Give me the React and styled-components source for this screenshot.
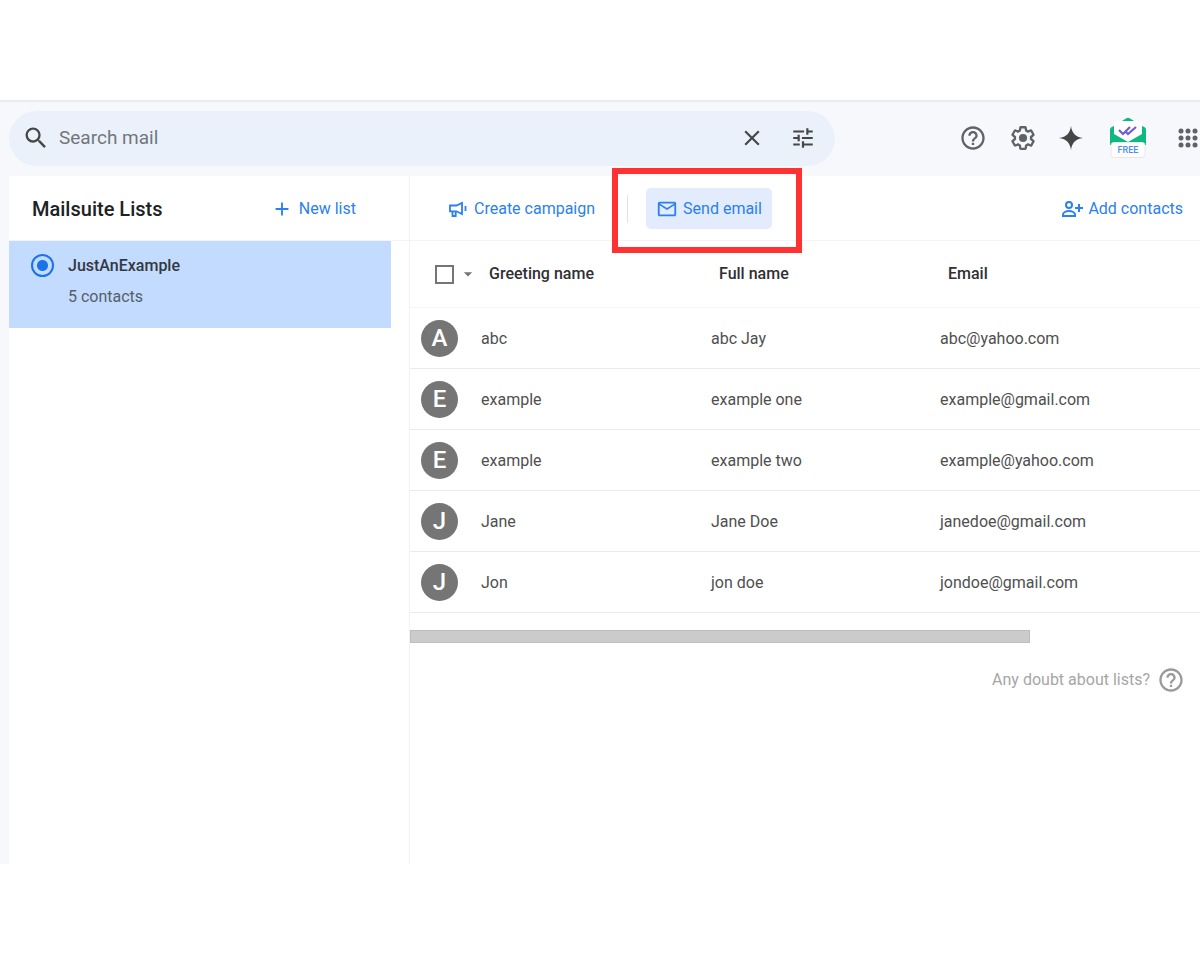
import React from "react";
import styled, { createGlobalStyle, css } from "styled-components";
import { MdSearch, MdClose, MdTune, MdHelpOutline, MdAdd, MdMailOutline, MdArrowDropDown } from "react-icons/md";

const sans = `Roboto, "Noto Sans", "Liberation Sans", sans-serif`;

const Global = createGlobalStyle`
  *, *::before, *::after { box-sizing: border-box; }
  body { margin: 0; background: #fff; font-family: ${sans}; font-size: 16px; line-height: 24px; color: #4f4f4f; }
  button, input { font: inherit; }
  button { border: 0; padding: 0; background: none; cursor: pointer; color: inherit; }
`;

const Page = styled.div`
  padding: 100px 0 96px;
`;

const Shell = styled.div`
  border-top: 2px solid #e9ebee;
  background: #f6f8fc;
  padding-left: 9px;
  overflow: hidden;
`;

const Header = styled.header`
  display: flex;
  align-items: center;
  justify-content: space-between;
  height: 74px;
  padding-bottom: 2px;
`;

const SearchBar = styled.form`
  flex: 0 1 826px;
  display: flex;
  align-items: center;
  height: 55px;
  padding: 0 19px 0 13px;
  border-radius: 28px;
  background: #eaf1fb;
  color: #444746;
`;

const IconButton = styled.button`
  display: grid;
  place-items: center;
  flex: none;
  width: ${(p) => p.$size || 26}px;
  height: ${(p) => p.$size || 26}px;
  color: ${(p) => p.$color || "#444746"};
  svg { width: 100%; height: 100%; display: block; }
`;

const SearchInput = styled.input`
  flex: 1;
  min-width: 0;
  margin: 0 9px;
  padding: 0;
  border: 0;
  outline: 0;
  background: transparent;
  font-size: 19px;
  color: #444746;
  &::placeholder { color: #72777b; opacity: 1; }
`;

const SearchTools = styled.div`
  display: flex;
  gap: 25px;
`;

const HeaderTools = styled.nav`
  display: flex;
  align-items: center;
  gap: 22px;
  margin-right: -2px;
`;

const Badge = styled.button`
  width: 38px;
  height: 42px;
  margin: 0 5px 0 4px;
  svg { display: block; }
`;

const Main = styled.div`
  display: flex;
  min-height: 688px;
  background: #fff;
`;

const Sidebar = styled.aside`
  flex: 0 0 401px;
  border-right: 1px solid #f2f2f4;
`;

const Bar = styled.div`
  display: flex;
  align-items: center;
  height: 65px;
  padding-top: 1px;
  border-bottom: 1px solid #f4f4f5;
`;

const SidebarBar = styled(Bar)`
  justify-content: space-between;
  padding-left: 23px;
  padding-right: 53px;
`;

const Title = styled.h1`
  margin: 0;
  font-size: 20px;
  font-weight: 500;
  color: #202124;
`;

const Action = styled.button`
  display: flex;
  align-items: center;
  gap: ${(p) => p.$gap || 5}px;
  height: 41px;
  color: #2b7fef;
  white-space: nowrap;
  svg { width: 22px; height: 22px; flex: none; }
  ${(p) =>
    p.$active &&
    css`
      padding: 0 10px;
      border-radius: 5px;
      background: #e3ecfd;
    `}
`;

const ListItem = styled.label`
  display: grid;
  grid-template-columns: 23px 1fr;
  column-gap: 14px;
  align-items: start;
  height: 87px;
  margin-right: 18px;
  padding: 13px 22px;
  background: #c2dbff;
  cursor: pointer;
`;

const Radio = styled.input`
  appearance: none;
  width: 23px;
  height: 23px;
  margin: 0;
  border: 2px solid #1a73e8;
  border-radius: 50%;
  background: radial-gradient(circle, #1a73e8 0 5px, transparent 6px);
`;

const ListText = styled.span`
  display: block;
  color: ${(p) => (p.$muted ? "#575f69" : "#34383e")};
  font-weight: ${(p) => (p.$muted ? 400 : 500)};
  & + & { margin-top: 7px; }
`;

const Content = styled.main`
  flex: 1;
  min-width: 0;
`;

const Toolbar = styled(Bar)`
  padding-left: 37px;
  padding-right: 17px;
`;

const Separator = styled.span`
  width: 1px;
  height: 28px;
  margin: 0 18px 0 32px;
  background: #e2e3e5;
`;

const Spacer = styled.span`
  flex: 1;
`;

const Highlighted = styled.div`
  position: relative;
  &::after {
    content: "";
    position: absolute;
    inset: -20px -30px -24px -34px;
    border: 6px solid #ff3131;
    pointer-events: none;
  }
`;

const TableWrap = styled.div`
  overflow: hidden;
`;

const Table = styled.table`
  width: 100%;
  min-width: 1006px;
  table-layout: fixed;
  border-collapse: separate;
  border-spacing: 0;
`;

const Col = styled.col`
  width: ${(p) => p.$w}px;
`;

const HeadCell = styled.th`
  height: 67px;
  padding: 0 8px;
  border-bottom: 1px solid #f4f4f5;
  text-align: left;
  font-weight: 500;
  color: #2f3033;
`;

const Cell = styled.td`
  height: 61px;
  padding: 2px 0 0;
  border-bottom: 1px solid #eaeaec;
`;

const AvatarCell = styled(Cell)`
  padding: 0;
`;

const SelectAll = styled.div`
  display: flex;
  align-items: center;
  gap: 4px;
  padding-left: 17px;
`;

const Checkbox = styled.input`
  appearance: none;
  flex: none;
  width: 19px;
  height: 19px;
  margin: 0;
  border: 2px solid #757575;
  background: #fff;
`;

const Avatar = styled.span`
  display: grid;
  place-items: center;
  width: 37px;
  height: 37px;
  margin-left: 11px;
  border-radius: 50%;
  background: #757575;
  color: #fff;
  font-size: 24px;
  font-weight: 500;
`;

const ScrollThumb = styled.div`
  width: 620px;
  max-width: 100%;
  height: 13px;
  margin-top: 17px;
  border: 1px solid #bdbdbd;
  background: #cbcbcb;
`;

const Help = styled.footer`
  display: flex;
  align-items: center;
  justify-content: flex-end;
  gap: 7px;
  margin-top: 23px;
  padding-right: 15px;
  color: #a6a6a6;
`;

const GearIcon = () => (
  <svg viewBox="0 0 24 24" fill="currentColor" aria-hidden="true">
    <path d="M13.85 22.25h-3.7c-.74 0-1.36-.54-1.45-1.27l-.27-1.89c-.27-.14-.53-.29-.79-.46l-1.8.72c-.7.26-1.47-.03-1.81-.65L2.2 15.53c-.35-.66-.2-1.44.36-1.88l1.53-1.19c-.01-.15-.02-.3-.02-.46 0-.15.01-.31.02-.46l-1.52-1.19c-.59-.45-.74-1.26-.37-1.88l1.85-3.19c.34-.62 1.11-.9 1.79-.63l1.81.73c.26-.17.52-.32.78-.46l.27-1.91c.09-.7.71-1.25 1.44-1.25h3.7c.74 0 1.36.54 1.45 1.27l.27 1.89c.27.14.53.29.79.46l1.8-.72c.71-.26 1.48.03 1.82.65l1.84 3.18c.36.66.2 1.44-.36 1.88l-1.52 1.19c.01.15.02.3.02.46s-.01.31-.02.46l1.52 1.19c.56.45.72 1.23.37 1.86l-1.86 3.22c-.34.62-1.11.9-1.8.63l-1.8-.72c-.26.17-.52.32-.78.46l-.27 1.91c-.1.68-.72 1.22-1.46 1.22zm-3.23-2h2.76l.37-2.55.53-.22c.44-.18.88-.44 1.34-.78l.45-.34 2.38.96 1.38-2.4-2.03-1.58.07-.56c.03-.26.06-.51.06-.78s-.03-.53-.06-.78l-.07-.56 2.03-1.58-1.39-2.4-2.39.96-.45-.35c-.42-.32-.87-.58-1.33-.77l-.52-.22-.37-2.55h-2.76l-.37 2.55-.53.21c-.44.19-.88.44-1.34.79l-.45.33-2.38-.95-1.39 2.39 2.03 1.58-.07.56a7 7 0 0 0-.06.79c0 .26.02.53.06.78l.07.56-2.03 1.58 1.38 2.4 2.39-.96.45.35c.43.33.86.58 1.33.77l.53.22.38 2.55z" />
    <circle cx="12" cy="12" r="3.5" />
  </svg>
);

const SparkIcon = () => (
  <svg viewBox="0 0 24 24" fill="currentColor" aria-hidden="true">
    <path d="M12 0c.9 6.800 4.200 11.100 12 12-7.800.9-11.100 5.200-12 12-.9-6.800-4.200-11.100-12-12C7.800 11.100 11.100 6.800 12 0z" />
  </svg>
);

const AppsIcon = () => (
  <svg viewBox="0 0 28 28" fill="currentColor" aria-hidden="true">
    {[7, 14, 21].map((y) => [7, 14, 21].map((x) => <circle key={`${x}-${y}`} cx={x} cy={y} r="2.500" />))}
  </svg>
);

const MegaphoneIcon = () => (
  <svg viewBox="0 0 22 22" fill="none" stroke="currentColor" strokeWidth="1.800" aria-hidden="true">
    <path d="M3 7.500h6.500L15 5v11l-5.500-2.700H3zM5.500 13.500V18h3.200v-4.500M18.500 8v5" />
  </svg>
);

const PersonAddIcon = () => (
  <svg viewBox="0 0 22 22" fill="none" stroke="currentColor" strokeWidth="2" aria-hidden="true">
    <circle cx="8" cy="7" r="3" />
    <path d="M2 18v-1.500c0-2 3-3.500 6-3.500s6 1.500 6 3.500V18zM18 6v8M14 10h8" />
  </svg>
);

const MailsuiteLogo = () => (
  <svg width="38" height="42" viewBox="0 0 38 42" aria-hidden="true">
    <path d="M1 13Q1 10 4 9.500L17 1.500Q19 0 21 1.500L34 9.500Q37 10 37 13v15H1z" fill="#0cb980" />
    <path d="M5 7q0-3 3-3h22q3 0 3 3v10L19 25 5 17z" fill="#fff" />
    <path d="m10 13 4 4 7-7M17 15l2 2 8-7" fill="none" stroke="#6c5dd3" strokeWidth="2.200" />
    <rect x="2" y="25.500" width="34" height="15" rx="3" fill="#fff" stroke="#e6e8ec" />
    <text x="19" y="36" textAnchor="middle" fontFamily="Roboto, sans-serif" fontSize="9" fontWeight="500" fill="#4a8df0">FREE</text>
  </svg>
);

const contacts = [
  ["abc", "abc Jay", "abc@yahoo.com"],
  ["example", "example one", "example@gmail.com"],
  ["example", "example two", "example@yahoo.com"],
  ["Jane", "Jane Doe", "janedoe@gmail.com"],
  ["Jon", "jon doe", "jondoe@gmail.com"],
];

export default function App() {
  return (
    <>
      <Global />
      <Page>
        <Shell>
          <Header>
            <SearchBar role="search">
              <IconButton type="button" $size={28} aria-label="Search"><MdSearch /></IconButton>
              <SearchInput type="text" placeholder="Search mail" aria-label="Search mail" />
              <SearchTools>
                <IconButton type="button" aria-label="Clear search"><MdClose /></IconButton>
                <IconButton type="button" aria-label="Search options"><MdTune /></IconButton>
              </SearchTools>
            </SearchBar>
            <HeaderTools aria-label="Tools">
              <IconButton $size={28} $color="#5f6368" aria-label="Help"><MdHelpOutline /></IconButton>
              <IconButton $size={28} $color="#5f6368" aria-label="Settings"><GearIcon /></IconButton>
              <IconButton $size={24} aria-label="Assistant"><SparkIcon /></IconButton>
              <Badge aria-label="Mailsuite"><MailsuiteLogo /></Badge>
              <IconButton $size={28} $color="#5f6368" aria-label="Apps"><AppsIcon /></IconButton>
            </HeaderTools>
          </Header>
          <Main>
            <Sidebar>
              <SidebarBar>
                <Title>Mailsuite Lists</Title>
                <Action $gap={6}><MdAdd />New list</Action>
              </SidebarBar>
              <ListItem>
                <Radio type="radio" name="list" defaultChecked />
                <span>
                  <ListText>JustAnExample</ListText>
                  <ListText $muted>5 contacts</ListText>
                </span>
              </ListItem>
            </Sidebar>
            <Content>
              <Toolbar>
                <Action><MegaphoneIcon />Create campaign</Action>
                <Separator />
                <Highlighted>
                  <Action $active><MdMailOutline />Send email</Action>
                </Highlighted>
                <Spacer />
                <Action><PersonAddIcon />Add contacts</Action>
              </Toolbar>
              <TableWrap>
                <Table>
                  <colgroup>
                    <Col $w={71} />
                    <Col $w={230} />
                    <Col $w={229} />
                    <col />
                  </colgroup>
                  <thead>
                    <tr>
                      <HeadCell>
                        <SelectAll>
                          <Checkbox type="checkbox" aria-label="Select all contacts" />
                          <IconButton $size={20} $color="#757575" aria-label="Selection options"><MdArrowDropDown /></IconButton>
                        </SelectAll>
                      </HeadCell>
                      <HeadCell>Greeting name</HeadCell>
                      <HeadCell>Full name</HeadCell>
                      <HeadCell>Email</HeadCell>
                    </tr>
                  </thead>
                  <tbody>
                    {contacts.map(([greeting, name, email]) => (
                      <tr key={email}>
                        <AvatarCell><Avatar>{greeting[0].toUpperCase()}</Avatar></AvatarCell>
                        <Cell>{greeting}</Cell>
                        <Cell>{name}</Cell>
                        <Cell>{email}</Cell>
                      </tr>
                    ))}
                  </tbody>
                </Table>
              </TableWrap>
              <ScrollThumb />
              <Help>
                Any doubt about lists?
                <IconButton $size={28} $color="#9a9a9a" aria-label="Help about lists"><MdHelpOutline /></IconButton>
              </Help>
            </Content>
          </Main>
        </Shell>
      </Page>
    </>
  );
}
